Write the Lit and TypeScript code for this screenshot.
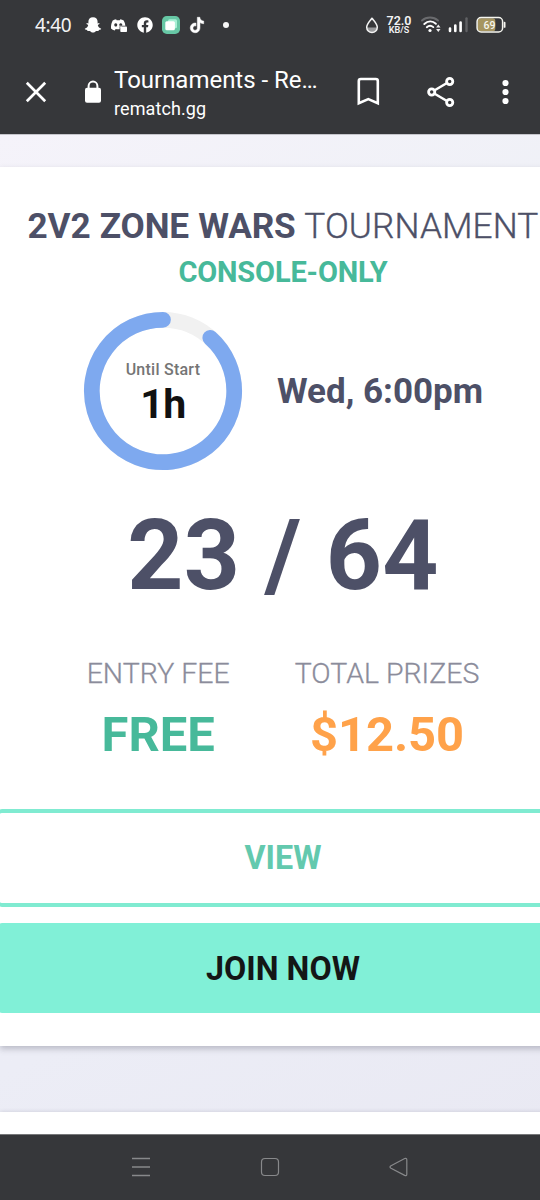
import { LitElement, html, css, svg } from "lit";
import { customElement } from "lit/decorators.js";

@customElement("status-bar")
class StatusBar extends LitElement {
  static styles = css`
    :host { display: flex; height: 50px; align-items: center; padding: 0 34px 0 35px; box-sizing: border-box; color: #f3f3f4; }
    svg { display: block; flex: none; }
    .time { font: 400 19px/24px "Noto Sans", sans-serif; width: 49px; white-space: nowrap; letter-spacing: -0.4px; }
    .apps { display: flex; align-items: center; gap: 8px; }
    .dot { width: 6px; height: 6px; border-radius: 50%; background: #f7f7f7; margin-left: 9px; }
    .system { display: flex; align-items: center; margin-left: auto; }
    .rate { display: flex; flex-direction: column; align-items: center; width: 26px; margin: 0 9px 0 7px; font-family: Roboto, sans-serif; font-weight: 600; white-space: nowrap; }
    .num { font-size: 12.500px; line-height: 10px; }
    .unit { font-size: 9px; line-height: 9px; }
    .signal { margin-left: 7px; }
    .battery { margin-left: 7px; }
    .level { font: 500 10.5px Roboto, sans-serif; fill: #f7f6ee; }
  `;
  render() {
    return html`
      <span class="time">4:40</span>
      <div class="apps">
        <svg width="18" height="18" viewBox="0 0 18 18"><path fill="#fff" d="M9 1.2c-3 0-4.7 2-4.6 4.6v1.6l-1.5-.3c-.6.2-.5 1 .1 1.200l1.200.7c-.3 1.600-1.500 3-3.100 3.500-.5.3-.3.9.4 1.100l1.600.4c.3.5.2 1 .7 1.100.8.1 1.600-.2 2.400.2.900.6 1.500 1.300 2.800 1.300s1.900-.7 2.800-1.300c.8-.4 1.600-.1 2.400-.2.5-.1.4-.6.7-1.100l1.600-.4c.7-.2.9-.8.4-1.100-1.600-.5-2.800-1.900-3.100-3.500l1.200-.7c.6-.2.7-1 .1-1.200l-1.500.3V5.800C13.700 3.200 12 1.200 9 1.200z"/></svg>
        <svg width="18" height="18" viewBox="0 0 18 18"><path fill="#fff" fill-rule="evenodd" d="M6.100 3.200C4.700 3.400 3.400 4 2.700 4.500 1.600 6.500.8 9.200 1 12.600c1 1 2.300 1.700 3.700 2l1-1.600c1.300.4 2.600.4 3.900.2V9.800h5.800c-.2-2-.8-3.800-1.700-5.300-1-.7-2.200-1.100-3.400-1.300l-.5 1H6.600zM5.700 7.200a1.500 1.700 0 1 0 .1 0zM10.700 7.200a1.500 1.700 0 1 0 .1 0z"/><rect x="10.300" y="10.400" width="6.700" height="5.600" rx=".8" fill="#fff"/></svg>
        <svg width="18" height="18" viewBox="-1.500 -2 27 28"><path fill="#fff" d="M24 12.073c0-6.627-5.373-12-12-12s-12 5.373-12 12c0 5.990 4.388 10.954 10.125 11.854v-8.385H7.078v-3.470h3.047V9.430c0-3.007 1.792-4.669 4.533-4.669 1.312 0 2.686.235 2.686.235v2.953H15.830c-1.491 0-1.956.925-1.956 1.874v2.250h3.328l-.532 3.470h-2.796v8.385C19.612 23.027 24 18.062 24 12.073z"/></svg>
        <svg width="18" height="18" viewBox="0 0 18 18"><rect width="18" height="18" rx="4.800" fill="#67c7a5"/><rect x="6" y="3.300" width="9" height="9" rx="1.500" fill="#a9f0d6"/><rect x="3.300" y="5.300" width="9.600" height="9" rx="1.500" fill="#fff"/></svg>
        <svg width="18" height="18" viewBox="-2 -2 28 28"><path fill="#fff" stroke="#fff" stroke-width=".8" d="M12.525.02c1.310-.02 2.610-.01 3.910-.02.08 1.530.63 3.090 1.750 4.170 1.120 1.110 2.700 1.620 4.240 1.790v4.030c-1.440-.05-2.890-.35-4.200-.97-.57-.26-1.100-.59-1.620-.93-.01 2.920.01 5.840-.02 8.750-.08 1.400-.54 2.790-1.350 3.940-1.310 1.920-3.580 3.170-5.910 3.210-1.430.08-2.860-.31-4.080-1.030-2.020-1.190-3.440-3.370-3.650-5.710-.02-.5-.03-1-.01-1.490.18-1.900 1.120-3.720 2.580-4.960 1.660-1.440 3.980-2.130 6.150-1.720.02 1.480-.04 2.960-.04 4.440-.99-.32-2.150-.23-3.020.37-.63.41-1.110 1.040-1.360 1.750-.21.51-.15 1.070-.14 1.610.24 1.640 1.820 3.020 3.500 2.870 1.120-.01 2.190-.66 2.770-1.610.19-.33.4-.67.41-1.060.1-1.790.06-3.570.07-5.360.01-4.030-.01-8.050.02-12.070z"/></svg>
        <span class="dot"></span>
      </div>
      <div class="system">
        <svg width="14" height="18" viewBox="0 0 14 18"><path d="M2 11.500h10a5 5 0 0 1-10 0z" fill="#999a9c"/><path d="M7 2.200C5 5 1.700 8 1.700 11.200a5.300 5.300 0 0 0 10.600 0C12.300 8 9 5 7 2.200z" fill="none" stroke="#f4f4f4" stroke-width="1.500" stroke-linejoin="round"/></svg>
        <div class="rate"><span class="num">72.0</span><span class="unit">KB/S</span></div>
        <svg width="20" height="18" viewBox="0 0 20 18"><g fill="none" stroke-linecap="round" stroke-width="1.900"><path d="M1 4.500C5.500.4 12.500.4 17 4.500" stroke="#6a6b6e"/><path d="M3.300 8c3.600-3.300 8.300-3.300 11.600-.2" stroke="#fff"/><path d="M5.800 11.200c2-1.800 4.500-1.800 6.500-.1" stroke="#fff"/></g><circle cx="9" cy="14.500" r="1.600" fill="#fff"/><path d="M17.300 8.500l2.200 3h-4.400zM17.300 16l-2.200-3h4.400z" fill="#eee"/></svg>
        <svg class="signal" width="21" height="18" viewBox="0 0 21 18"><path d="M2 12.500V15M7.300 9.500V15M12.600 6.500V15" stroke="#fff" stroke-width="2.600" stroke-linecap="round"/><path d="M18.500 2.500V15" stroke="#606164" stroke-width="2.400" stroke-linecap="round"/></svg>
        <svg class="battery" width="30" height="18" viewBox="0 0 30 18"><rect x="1.800" y="2.300" width="17.500" height="13" rx="2.500" fill="#a69560"/><rect x="1.100" y="1.600" width="25.500" height="14.300" rx="4" fill="none" stroke="#f6f6f0" stroke-width="1.500"/><path d="M28.600 6.700v4.200" stroke="#f6f6f0" stroke-width="1.800" stroke-linecap="round"/><text class="level" x="13.500" y="12.600" text-anchor="middle">69</text></svg>
      </div>`;
  }
}

@customElement("browser-toolbar")
class BrowserToolbar extends LitElement {
  static styles = css`
    :host { display: flex; height: 84px; align-items: center; padding: 0 20px 0 23px; box-sizing: border-box; color: #fff; font-family: Roboto, sans-serif; }
    svg { display: block; flex: none; }
    .lock { margin-left: 34px; }
    .page { display: flex; flex-direction: column; width: 206px; margin-left: 11px; padding-top: 4px; white-space: nowrap; }
    .name { font-size: 24px; line-height: 29px; letter-spacing: -0.02px; }
    .host { font-size: 18px; line-height: 27px; letter-spacing: 0.1px; }
    .actions { display: flex; align-items: center; margin-left: auto; }
    .share { margin-left: 46px; }
    .more { margin-left: 40px; }
  `;
  render() {
    return html`
      <svg width="26" height="26" viewBox="0 0 26 26"><path d="M3.800 3.800l18.400 18.400M22.200 3.800L3.800 22.200" stroke="#fff" stroke-width="2.700"/></svg>
      <svg class="lock" width="20" height="26" viewBox="0 0 20 26"><path d="M5.600 10V7a4.400 4.400 0 0 1 8.800 0v3" fill="none" stroke="#fff" stroke-width="2"/><rect x="2" y="8.800" width="16" height="15" rx="2" fill="#fff"/></svg>
      <div class="page"><span class="name">Tournaments - Re…</span><span class="host">rematch.gg</span></div>
      <div class="actions">
        <svg width="24" height="30" viewBox="0 0 24 30"><path d="M2.800 26.300V4a2 2 0 0 1 2-2h15a2 2 0 0 1 2 2v22.300l-9.500-4.200z" fill="none" stroke="#fff" stroke-width="2.600"/></svg>
        <svg class="share" width="30" height="32" viewBox="0 0 30 32"><path d="M5.700 16L23.500 5.500M5.700 16l17.800 10.500" stroke="#fff" stroke-width="2.600"/><g fill="#36373a" stroke="#fff" stroke-width="2.800"><circle cx="5.700" cy="16" r="3.100"/><circle cx="23.700" cy="5.500" r="3.100"/><circle cx="23.700" cy="26.500" r="3.100"/></g></svg>
        <svg class="more" width="24" height="30" viewBox="0 0 24 30" fill="#fff"><circle cx="9.500" cy="6" r="3.100"/><circle cx="9.500" cy="15" r="3.100"/><circle cx="9.500" cy="24" r="3.100"/></svg>
      </div>`;
  }
}

@customElement("tournament-card")
class TournamentCard extends LitElement {
  static styles = css`
    :host { display: flex; flex-direction: column; align-items: center; width: 566px; height: 879px; background: #fff; box-shadow: 0 3px 6px rgba(40, 40, 60, 0.25); color: #4d5067; font-family: Roboto, sans-serif; white-space: nowrap; box-sizing: border-box; padding-top: 35px; }
    .title { font-size: 35.200px; line-height: 48px; font-weight: 300; letter-spacing: 0.1px; word-spacing: 0.7px; -webkit-text-stroke: 0.35px #4d5067; }
    .title b { font-weight: 700; letter-spacing: -0.15px; -webkit-text-stroke: 0; }
    .platform { font-size: 29px; line-height: 44px; font-weight: 700; letter-spacing: -0.15px; color: #47b99a; }
    .schedule { display: flex; align-items: center; gap: 34px; margin-top: 17px; }
    .timer { display: grid; width: 160px; height: 160px; }
    .timer > * { grid-area: 1 / 1; }
    .remaining { display: flex; flex-direction: column; align-items: center; padding-top: 47px; }
    .caption { font-size: 16px; line-height: 24px; font-weight: 500; letter-spacing: 0.25px; color: #757575; }
    .hours { font-size: 41px; line-height: 44px; font-weight: 700; letter-spacing: -0.5px; color: #111; }
    .when { font-size: 35px; font-weight: 700; line-height: 44px; padding-top: 2px; }
    .count { font-size: 98px; font-weight: 700; line-height: 116px; margin-top: 27px; letter-spacing: 0.2px; }
    .stats { display: flex; gap: 65px; margin-top: 40px; }
    .stat { display: flex; flex-direction: column; align-items: center; }
    .label { font-size: 28.500px; line-height: 40px; font-weight: 300; color: #8b8c9b; -webkit-text-stroke: 0.3px #8b8c9b; }
    .value { font-size: 48.900px; line-height: 60px; font-weight: 700; margin-top: 11px; }
    .free { color: #47b99a; }
    .prize { color: #ffa24a; letter-spacing: -0.1px; }
    .btn { align-self: stretch; box-sizing: border-box; display: flex; align-items: center; justify-content: center; margin-left: -3px; margin-right: -3px; border-radius: 5px; font-size: 32.300px; font-weight: 700; }
    .view { height: 98px; margin-top: 44px; border: 4px solid #80ebd1; border-left-width: 3px; border-right-width: 3px; color: #63c9ae; }
    .join { height: 90px; margin-top: 16px; padding-top: 1px; background: #81f0d7; color: #141616; }
  `;
  render() {
    const r = 71.2;
    const a = (41.6 * Math.PI) / 180;
    const x = 80 + r * Math.sin(a);
    const y = 80 - r * Math.cos(a);
    return html`
      <div class="title"><b>2V2 ZONE WARS</b> TOURNAMENT</div>
      <div class="platform">CONSOLE-ONLY</div>
      <div class="schedule">
        <div class="timer">
          <svg width="160" height="160" viewBox="0 0 160 160" fill="none" stroke-width="15.700">
            ${svg`<circle cx="80" cy="80" r=${r} stroke="#f1f1f1"/>
            <path d="M${x} ${y}A${r} ${r} 0 1 1 80 ${80 - r}" stroke="#7ea9ef" stroke-linecap="round"/>`}
          </svg>
          <div class="remaining"><span class="caption">Until Start</span><span class="hours">1h</span></div>
        </div>
        <span class="when">Wed, 6:00pm</span>
      </div>
      <div class="count">23 / 64</div>
      <div class="stats">
        <div class="stat"><span class="label">ENTRY FEE</span><span class="value free">FREE</span></div>
        <div class="stat"><span class="label">TOTAL PRIZES</span><span class="value prize">$12.50</span></div>
      </div>
      <div class="btn view">VIEW</div>
      <div class="btn join">JOIN NOW</div>`;
  }
}

@customElement("app-root")
class AppRoot extends LitElement {
  static styles = css`
    :host { display: flex; flex-direction: column; width: 540px; height: 1200px; overflow: hidden; background: #36373a; }
    .page { height: 1000px; flex: none; overflow: hidden; box-sizing: border-box; border-top: 1px solid #c5c5cb; padding-top: 32px; background: linear-gradient(155deg, #f5f3fa, #eef0f6 30%, #ecedf6 75%, #e9e9f3); }
    .next { width: 566px; height: 60px; margin-top: 66px; background: #fff; box-shadow: 0 0 4px rgba(40, 40, 60, 0.17); }
    .nav { display: flex; height: 66px; align-items: center; justify-content: space-between; padding: 0 130px 1px; box-sizing: border-box; border-top: 1px solid #77787a; }
    .nav svg { display: block; }
  `;
  render() {
    return html`
      <status-bar></status-bar>
      <browser-toolbar></browser-toolbar>
      <div class="page">
        <tournament-card></tournament-card>
        <div class="next"></div>
      </div>
      <div class="nav">
        <svg width="22" height="22" viewBox="0 0 22 22"><path d="M2 2.500h18M2 11h18M2 19.500h18" stroke="#88898b" stroke-width="1.500"/></svg>
        <svg width="22" height="22" viewBox="0 0 22 22"><rect x="2.500" y="2.500" width="17" height="17" rx="3.500" fill="none" stroke="#88898b" stroke-width="1.200"/></svg>
        <svg width="22" height="22" viewBox="0 0 22 22"><path d="M3 9.800L16.700 2.500Q18.800 1.800 18.800 3.800v14.400q0 2-2.100 1.200L3 12.200q-2-1.200 0-2.400z" fill="none" stroke="#88898b" stroke-width="1.200"/></svg>
      </div>`;
  }
}
